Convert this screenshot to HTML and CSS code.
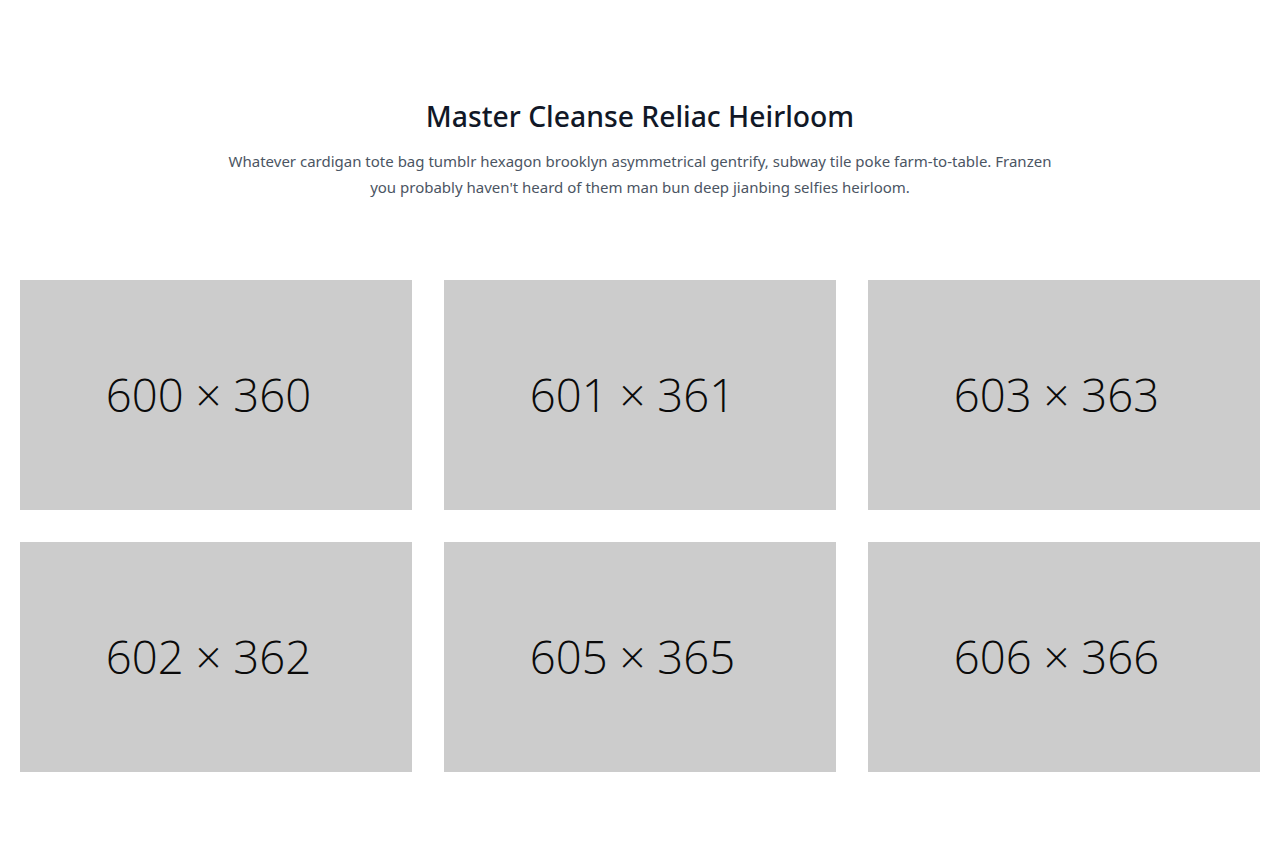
FILE: index.html
```html
<!DOCTYPE html>
<html lang="en">
<head>
<meta charset="utf-8">
<title>Master Cleanse Reliac Heirloom</title>
<link rel="stylesheet" href="styles.css">
</head>
<body>
<section class="gallery">
  <header class="intro">
    <h1 class="title">Master Cleanse Reliac Heirloom</h1>
    <p class="lead">Whatever cardigan tote bag tumblr hexagon brooklyn asymmetrical gentrify, subway tile poke farm-to-table. Franzen you probably haven't heard of them man bun deep jianbing selfies heirloom.</p>
  </header>
  <div class="grid">
    <div class="ph"><span>600 × 360</span></div>
    <div class="ph"><span>601 × 361</span></div>
    <div class="ph"><span>603 × 363</span></div>
    <div class="ph"><span>602 × 362</span></div>
    <div class="ph"><span>605 × 365</span></div>
    <div class="ph"><span>606 × 366</span></div>
  </div>
</section>
</body>
</html>
```

FILE: styles.css
```css
* { box-sizing: border-box; }
html, body { margin: 0; padding: 0; background: #fff; }
body { font-family: "Noto Sans", "Open Sans", sans-serif; color: #4b5563; }

.gallery { padding: 98px 20px 96px; }

.intro { text-align: center; display: flex; flex-direction: column; align-items: center; margin-bottom: 80px; }
.title {
  margin: 0 0 14px;
  font-size: 28.3px;
  line-height: 36px;
  font-weight: 500;
  color: #111827;
}
.lead {
  margin: 0;
  width: 836px;
  font-size: 15px;
  line-height: 26px;
  color: #4b5563;
}

.grid {
  display: grid;
  grid-template-columns: repeat(3, 392px);
  gap: 32px;
}
.ph {
  height: 230px;
  background: #cccccc;
  display: flex;
  align-items: center;
  justify-content: center;
  padding: 0 15px 3px 0;
}
.ph span {
  font-family: "Open Sans", sans-serif;
  font-weight: 300;
  font-size: 45.5px;
  color: #0a0a0a;
}
```
